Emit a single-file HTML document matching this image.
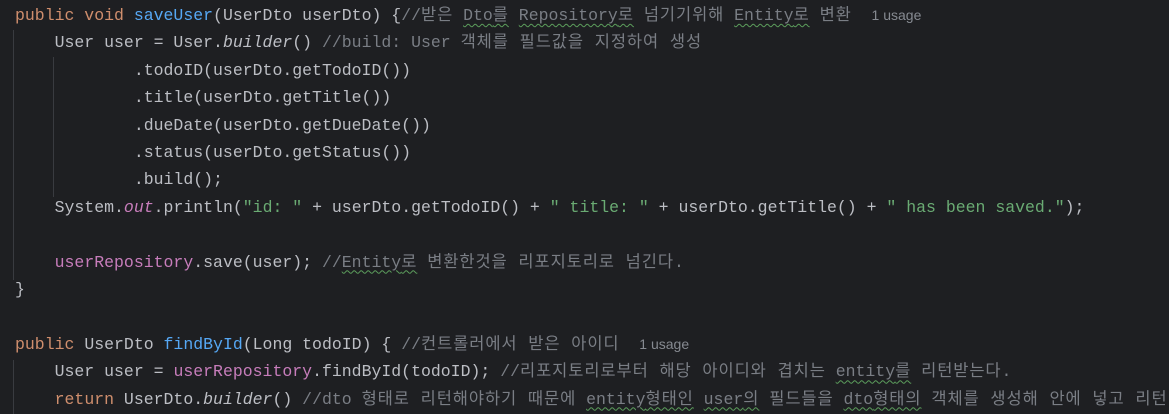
<!DOCTYPE html>
<html><head><meta charset="utf-8"><style>
html,body{margin:0;padding:0;background:#1e1f22;width:1169px;height:414px;overflow:hidden}
.c{position:absolute;left:15px;top:2px;font-family:"Liberation Mono","Noto Sans CJK KR",monospace;font-size:16.5px;line-height:27.4px;color:#bcbec4;white-space:pre}
.k{color:#cf8e6d}.m{color:#56a8f5}.cm{color:#7a7e85}.s{color:#6aab73}.f{color:#c77dbb}.i{font-style:italic}
.h{letter-spacing:0.9px}
.u{font-family:"Liberation Sans",sans-serif;font-size:14px;color:#868a91}
.w{text-decoration:underline wavy #5c9e5c;text-decoration-thickness:1px;text-underline-offset:3px}
.g{position:absolute;width:1px;background:#393b40}
</style></head><body>
<div class="g" style="left:13px;top:30px;height:250px"></div>
<div class="g" style="left:53px;top:57px;height:140px"></div>
<div class="g" style="left:13px;top:360px;height:54px"></div>
<div class="c"><span class="k">public void </span><span class="m">saveUser</span>(UserDto userDto) {<span class="cm">//<span class="h">받은</span> <span class="w">Dto<span class="h">를</span></span> <span class="w">Repository<span class="h">로</span></span> <span class="h">넘기기위해</span> <span class="w">Entity<span class="h">로</span></span> <span class="h">변환</span></span>  <span class="u">1 usage</span>
    User user = User.<span class="i">builder</span>() <span class="cm">//build: User <span class="h">객체를 필드값을 지정하여 생성</span></span>
            .todoID(userDto.getTodoID())
            .title(userDto.getTitle())
            .dueDate(userDto.getDueDate())
            .status(userDto.getStatus())
            .build();
    System.<span class="f i">out</span>.println(<span class="s">"id: "</span> + userDto.getTodoID() + <span class="s">" title: "</span> + userDto.getTitle() + <span class="s">" has been saved."</span>);

    <span class="f">userRepository</span>.save(user); <span class="cm">//<span class="w">Entity<span class="h">로</span></span> <span class="h">변환한것을 리포지토리로 넘긴다</span>.</span>
}

<span class="k">public </span>UserDto <span class="m">findById</span>(Long todoID) { <span class="cm">//<span class="h">컨트롤러에서 받은 아이디</span></span>  <span class="u">1 usage</span>
    User user = <span class="f">userRepository</span>.findById(todoID); <span class="cm">//<span class="h">리포지토리로부터 해당 아이디와 겹치는</span> <span class="w">entity<span class="h">를</span></span> <span class="h">리턴받는다</span>.</span>
    <span class="k">return </span>UserDto.<span class="i">builder</span>() <span class="cm">//dto <span class="h">형태로 리턴해야하기 때문에</span> <span class="w">entity<span class="h">형태인</span></span> <span class="w">user<span class="h">의</span></span> <span class="h">필드들을</span> <span class="w">dto<span class="h">형태의</span></span> <span class="h">객체를 생성해 안에 넣고 리턴</span></span>
</div>
</body></html>
